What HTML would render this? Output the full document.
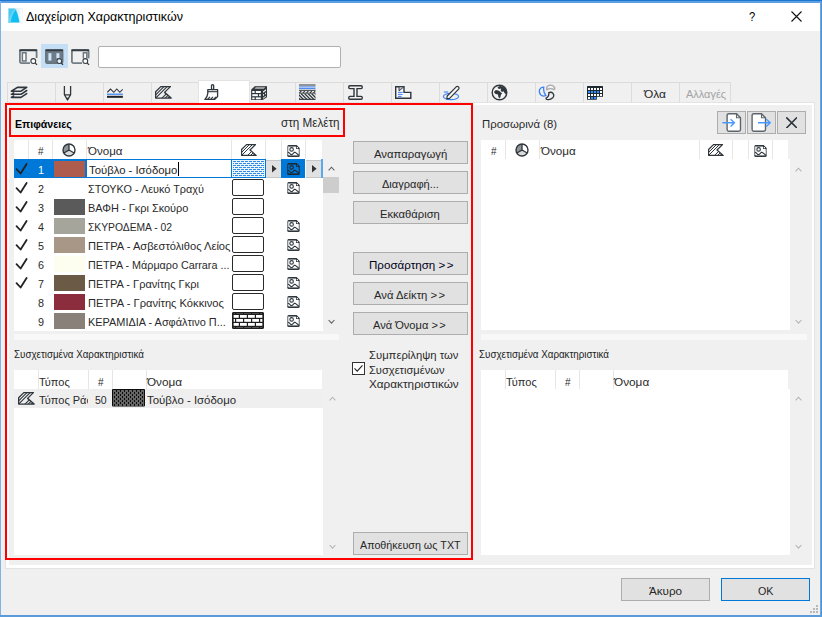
<!DOCTYPE html>
<html lang="el">
<head>
<meta charset="utf-8">
<title>Διαχείριση Χαρακτηριστικών</title>
<style>
*{box-sizing:border-box;margin:0;padding:0}
html,body{width:822px;height:617px;overflow:hidden}
body{position:relative;background:#f0f0f0;font-family:"Liberation Sans","DejaVu Sans",sans-serif;font-size:12px;color:#1a1a1a}
.a{position:absolute}
.t{position:absolute;white-space:nowrap;line-height:16px;height:16px}
.btn{position:absolute;background:#e1e1e1;border:1px solid #adadad;text-align:center;line-height:21px;height:23px;white-space:nowrap;color:#111}
.w{background:#fff}
.sw{position:absolute;left:54px;width:31px;height:16px}
.fb{position:absolute;left:232px;width:32px;height:17px;border:1.6px solid #2a2a2a;border-radius:2px;background:#fff}
.num{position:absolute;left:28px;width:24px;text-align:center;line-height:19px;height:19px}
.nm{position:absolute;left:88px;width:143px;line-height:19px;height:19px;white-space:nowrap;overflow:hidden}
.hs{position:absolute;width:1px;background:#e6e6e6}
.ts{position:absolute;top:83px;width:1px;height:20px;background:#dcdcdc}
</style>
</head>
<body>
<!-- window frame -->
<div class="a" style="left:0;top:0;width:822px;height:1px;background:#1b76d2"></div>
<div class="a" style="left:0;top:1px;width:822px;height:2px;background:#5d9fe0"></div>
<div class="a w" style="left:1px;top:3px;width:819px;height:28px"></div>
<div class="a" style="left:0;top:1px;width:1px;height:616px;background:#7fb2e6"></div>
<div class="a" style="left:820px;top:1px;width:1px;height:616px;background:#6ea6de"></div><div class="a" style="left:821px;top:1px;width:1px;height:616px;background:#4f92d4"></div>
<div class="a" style="left:0;top:615px;width:822px;height:2px;background:#5b9bdc"></div>

<!-- title -->
<svg class="a" style="left:7.600px;top:8.200px" width="15" height="15" viewBox="0 0 15 15">
<defs><linearGradient id="lg" x1="0" x2="1"><stop offset="0" stop-color="#c9e9f8"/><stop offset="1" stop-color="#ffffff"/></linearGradient></defs>
<rect x="0.300" y="0.300" width="14.400" height="14.400" fill="#fff" stroke="#e4e4e4" stroke-width="0.600"/>
<rect x="6.500" y="0.600" width="8" height="13.800" fill="url(#lg)"/>
<path d="M0.500 0.500H7C4 3.500 1.800 8 0.500 14.500Z" fill="#45cbf3"/>
<path d="M0.500 14.500C1.800 8 4 3.500 7 0.800C9 3.500 10.500 8 11.500 14.500Z" fill="#12bdf0"/>
<path d="M0.500 14.500C1.800 8 4 3.500 7 0.800L7.800 1.800C5 4.800 3.500 9 2.700 14.500Z" fill="#6ad6f6"/>
</svg>

<div class="t" style="left:25.5px;top:8.84px;font-size:12px;color:#000;transform:scaleX(1.0432);transform-origin:0 0"><span id="title">Διαχείριση Χαρακτηριστικών</span></div>
<div class="t" style="left:748.5px;top:8.50px;font-size:13px;color:#000;transform:scaleX(0.8600);transform-origin:0 0"><span id="q">?</span></div>

<svg class="a" style="left:791px;top:11px" width="11" height="11" viewBox="0 0 11 11"><path d="M0.5 0.5L10.5 10.5M10.5 0.5L0.5 10.5" stroke="#111" stroke-width="1.1" fill="none"/></svg>

<!-- toolbar -->
<div class="a" style="left:41px;top:44px;width:27px;height:24px;background:#c4def5;border-radius:1px"></div>
<svg class="a" style="left:19px;top:49px" width="19" height="17" viewBox="0 0 19 17">
<rect x="0.900" y="1.200" width="16.700" height="12.900" rx="1.500" fill="#eef0f1" stroke="#737d85" stroke-width="1.800"/>
<rect x="0.2" y="0.2" width="18.1" height="2" rx="0.8" fill="#363e44"/>
<rect x="3.400" y="3.800" width="3.600" height="8.200" fill="#fff" stroke="#6c767e" stroke-width="1.500"/>
<rect x="11" y="9" width="8" height="8" fill="#f0f0f0"/>
<circle cx="14.3" cy="12" r="2.4" fill="#fff" stroke="#333b41" stroke-width="1.050"/><path d="M16.100 13.900L18 15.900" stroke="#333b41" stroke-width="1.300"/>
</svg>
<svg class="a" style="left:45px;top:49px" width="19" height="17" viewBox="0 0 19 17">
<rect x="0.8" y="1.2" width="16.9" height="13" rx="1.5" fill="#6d7c88" stroke="#66737d" stroke-width="1.5"/>
<rect x="0.2" y="0.2" width="18.1" height="2" rx="0.8" fill="#363e44"/>
<rect x="3.4" y="4.2" width="3" height="7.4" fill="#cfe5f8"/>
<rect x="11.4" y="4.2" width="3" height="5" fill="#cfe5f8"/>
<circle cx="14.3" cy="12" r="2.9" fill="#c4def5"/>
<circle cx="14.3" cy="12" r="2.4" fill="#e8f2fb" stroke="#333b41" stroke-width="1.050"/><path d="M16.100 13.900L18 15.900" stroke="#333b41" stroke-width="1.300"/>
</svg>
<svg class="a" style="left:71px;top:49px" width="19" height="17" viewBox="0 0 19 17">
<rect x="0.900" y="1.200" width="16.700" height="12.900" rx="1.500" fill="#f0f0f0" stroke="#737d85" stroke-width="1.800"/>
<rect x="0.2" y="0.2" width="18.1" height="2" rx="0.8" fill="#363e44"/>
<rect x="12.400" y="3.800" width="3.400" height="6" fill="#fff" stroke="#6c767e" stroke-width="1.500"/>
<rect x="11" y="9.4" width="8" height="8" fill="#f0f0f0"/>
<circle cx="14.3" cy="12" r="2.4" fill="#fff" stroke="#333b41" stroke-width="1.050"/><path d="M16.100 13.900L18 15.900" stroke="#333b41" stroke-width="1.300"/>
</svg>
<div class="a w" style="left:98px;top:46px;width:243px;height:22px;border:1px solid #b0b0b0;border-radius:2px"></div>

<!-- tabs -->
<div class="a" style="left:7px;top:82px;width:724px;height:1px;background:#dcdcdc"></div>
<div class="ts" style="left:7px"></div>
<div class="ts" style="left:55px"></div>
<div class="ts" style="left:103px"></div>
<div class="ts" style="left:151px"></div>
<div class="ts" style="left:199px"></div>
<div class="ts" style="left:247px"></div>
<div class="ts" style="left:295px"></div>
<div class="ts" style="left:343px"></div>
<div class="ts" style="left:391px"></div>
<div class="ts" style="left:439px"></div>
<div class="ts" style="left:487px"></div>
<div class="ts" style="left:535px"></div>
<div class="ts" style="left:583px"></div>
<div class="ts" style="left:631px"></div>
<div class="ts" style="left:679px"></div><div class="ts" style="left:730px"></div>
<div class="a" style="left:5px;top:102px;width:810px;height:467px;border:1px solid #e3e3e3"></div>
<div class="a" style="left:6px;top:103px;width:808px;height:465px;border:2px solid #fff;border-left-width:3px;border-bottom-width:3px"></div>
<div class="a w" style="left:198px;top:80.400px;width:51.600px;height:24px;border:1px solid #e3e3e3;border-bottom:none"></div>

<svg class="a" style="left:10px;top:86px" width="18" height="13" viewBox="0 0 18 13" fill="none" stroke="#2f373d" stroke-width="1.600" stroke-linejoin="round" stroke-linecap="round">
<path d="M7.400 1.400H16.700L11 5.200H1.400Z"/><path d="M16.700 4.500L11 8.300H1.400L3.600 6.900"/><path d="M16.700 7.600L11 11.400H1.400L3.600 10"/></svg>
<svg class="a" style="left:63px;top:85px" width="9" height="16" viewBox="0 0 9 16"><path d="M1.400 0.900V9.600L4.500 15L7.600 9.600V0.900M1.400 9.800H7.600" fill="none" stroke="#2f373d" stroke-width="1.300" stroke-linejoin="round"/><path d="M3.500 13L4.500 15L5.500 13Z" fill="#2f373d" stroke="#2f373d" stroke-width="0.600"/></svg>
<svg class="a" style="left:107px;top:88px" width="17" height="11" viewBox="0 0 17 11"><path d="M0.300 4.300L3.500 1L6.800 4.300L9.800 1L12.800 4.300L15.700 1.300" fill="none" stroke="#2f373d" stroke-width="1.100"/><rect x="0" y="5.600" width="15.900" height="1.200" fill="#2f80f5"/><rect x="0" y="7.800" width="15.900" height="2" fill="#1d2429"/></svg>

<svg class="a" style="left:155px;top:86px" width="17" height="12.75" viewBox="0 0 16 12"><defs><clipPath id="fc155_86"><path d="M5.500 0.600H14.500L9 6L15.200 11.400H0.600V5.500Z"/></clipPath></defs><g clip-path="url(#fc155_86)" stroke="#2f373d" stroke-width="1.0"><path d="M-4 13L10 -1M-1 13L13 -1M5 13L19 -1M8 13L22 -1"/><path d="M11.500 11.400L13.500 9.600L15.600 11.400Z" fill="#2f373d" stroke="none"/></g><path d="M5.500 0.600H14.500L9 6L15.200 11.400H0.600V5.500Z" fill="none" stroke="#2f373d" stroke-width="1.25" stroke-linejoin="round"/></svg>
<svg class="a" style="left:204px;top:84px" width="15" height="16" viewBox="0 0 15 16" fill="none" stroke="#2f373d" stroke-width="1.300" stroke-linejoin="round">
<rect x="7.500" y="0.700" width="2.200" height="5" rx="1.100"/>
<path d="M3.800 5.600H13.600V12.500L10.800 15.400H0.900C2.600 13.800 3.600 12 3.800 9.200Z"/><path d="M3.800 7.700H13.600" stroke-width="1.100"/>
<path d="M3.800 15.200L6 12.800M6.800 15.200L9 12.800M9.800 15.200L12 12.800" stroke-width="1.200"/></svg>
<svg class="a" style="left:251px;top:85.500px" width="16.400" height="14.600" viewBox="0 0 16.400 14.600"><path d="M0.200 3.700L4 0.200H16.100V10.900L10.800 14.400H0.200Z" fill="#2f373d" stroke="#2f373d" stroke-width="0.400" stroke-linejoin="round"/><g fill="#fff"><rect x="1.300" y="5" width="2.300" height="2"/><rect x="4.800" y="5" width="5" height="2"/><rect x="1.300" y="8.200" width="5.600" height="2"/><rect x="8.100" y="8.200" width="1.700" height="2"/><rect x="1.300" y="11.400" width="2.300" height="1.900"/><rect x="4.800" y="11.400" width="5" height="1.900"/><path d="M4.800 1.400H14.200L12.800 2.500H3.600Z"/><path d="M12 5.400L15 3.300V4.700L12 6.800Z"/><path d="M12 8.600L13.100 7.800V9.300L12 10.100Z"/><path d="M14.100 7.100L15 6.500V8L14.100 8.600Z"/><path d="M12 11.800L15 9.700V10.500L12 12.700Z"/></g></svg>
<svg class="a" style="left:299px;top:84px" width="17" height="16" viewBox="0 0 17 16">
<rect x="0" y="0.5" width="16.5" height="1" fill="#2f373d"/><rect x="0" y="2.4" width="16.5" height="1" fill="#3b82f6"/><rect x="0" y="4" width="16.5" height="0.9" fill="#3b82f6"/>
<rect x="0" y="5.8" width="16.5" height="1" fill="#2f373d"/>
<defs><clipPath id="cc1"><rect x="0" y="6.8" width="16.5" height="2.2"/></clipPath><clipPath id="cc2"><rect x="0" y="9.6" width="16.5" height="6"/></clipPath></defs>
<g clip-path="url(#cc1)" stroke="#2f373d" stroke-width="1.100"><path d="M-1 11L3 6M2.5 11L6.5 6M6 11L10 6M9.5 11L13.5 6M13 11L17 6M16.5 11L20.5 6"/></g>
<rect x="0" y="8.700" width="16.5" height="0.900" fill="#2f373d"/>
<g clip-path="url(#cc2)" stroke="#2f373d" stroke-width="1.250"><path d="M-5 9.5L2 16.5M-1.5 9.5L5.5 16.5M2 9.5L9 16.5M5.5 9.5L12.500 16.5M9 9.5L16 16.5M12.5 9.5L19.5 16.5M16 9.5L23 16.5"/></g>
<rect x="0" y="14.8" width="16.5" height="1.1" fill="#2f373d"/>
</svg>
<svg class="a" style="left:348px;top:85px" width="15" height="15" viewBox="0 0 15 15"><path d="M1.8 0.8H13.2Q14.2 0.8 14.2 1.8V2.6Q14.2 3.6 13.2 3.6H9V11.4H13.2Q14.2 11.4 14.2 12.4V13.2Q14.2 14.2 13.2 14.2H1.8Q0.8 14.2 0.8 13.2V12.4Q0.8 11.4 1.8 11.4H6V3.6H1.8Q0.8 3.6 0.8 2.6V1.8Q0.8 0.8 1.8 0.8Z" fill="none" stroke="#2f373d" stroke-width="1.4"/></svg>
<svg class="a" style="left:395px;top:86px" width="17" height="13" viewBox="0 0 17 13"><path d="M0.7 0.7H9V6.4H15.8V12.3H0.7Z" fill="#f8f8f8" stroke="#2f373d" stroke-width="1.4"/><path d="M4 0.7H9L4 5Z" fill="#b9bec2" stroke="#2f373d" stroke-width="0.9"/><path d="M3 6.4H7.6M3 8.4H7.6M3 10.4H6.6" stroke="#3b82f6" stroke-width="1"/></svg>
<svg class="a" style="left:442px;top:85px" width="18" height="16" viewBox="0 0 18 16"><ellipse cx="9" cy="11.5" rx="7.6" ry="3.2" fill="none" stroke="#3b82f6" stroke-width="1.2"/><path d="M1.8 7H6.2" stroke="#3b82f6" stroke-width="1.1"/><path d="M5.200 11L14.200 1.800Q15.400 0.900 16.500 1.900Q17.500 3 16.600 4.200L7.600 13.400L4.800 13.900Z" fill="#f6f6f6" stroke="#2f373d" stroke-width="1.200" stroke-linejoin="round"/></svg>
<svg class="a" style="left:490.600px;top:84.400px" width="17" height="17" viewBox="0 0 17 17"><circle cx="8.500" cy="8.500" r="7.300" fill="#f4f4f4" stroke="#2f373d" stroke-width="1.400"/><path d="M7.400 2.700L9 1.900Q12.500 1.700 14.600 4.800Q16 7.500 15.400 10.400L13.600 9.200L12.600 7.300L11 7.900L9.600 6.500L10.200 4.500L8.200 4.900L6.400 4.100Z" fill="#2f373d"/><path d="M3.300 7.300L5 6.100L8 6.800L10 8.400L11.200 9.500L9.900 10.700L9.500 13L8.300 14.500L7.300 12.700L7 10.500L4.600 10L3.200 8.700Z" fill="#2f373d"/></svg>
<svg class="a" style="left:538px;top:84px" width="18" height="17" viewBox="0 0 18 17" fill="none" stroke-width="1.3">
<path d="M5.8 3.2Q3 2.8 1.6 5.6Q0.6 9 3.2 11.2Q5.6 12.8 7.8 11.4Q5 8 5.8 3.2Z" stroke="#3b82f6"/>
<path d="M8.6 5.6Q8.2 2 11.6 1.2Q15.2 0.8 16.8 4Q17 5.4 16 5.6Q13 3.6 8.6 5.6Z" stroke="#a9a9a9"/>
<path d="M10.8 8.6Q13.400 7.600 15 9.4Q16.6 11.8 14.8 13.800Q12 16.400 8.8 15.4Q7.600 14.800 8.200 14Q11.400 12.400 10.800 8.600Z" stroke="#2f373d"/></svg>
<svg class="a" style="left:587px;top:86px" width="16" height="14" viewBox="0 0 16 14"><path d="M0.600 0H15.400Q16 0 16 0.600V10.800H9.800V13.800H0.600Q0 13.800 0 13.200V0.600Q0 0 0.600 0Z" fill="#1f2a30"/><rect x="1" y="2" width="2" height="2" fill="#fff"/><rect x="4" y="2" width="2" height="2" fill="#fff"/><rect x="7" y="2" width="2" height="2" fill="#fff"/><rect x="10" y="2" width="2" height="2" fill="#fff"/><rect x="13" y="2" width="2" height="2" fill="#fff"/><rect x="1" y="5" width="2" height="2" fill="#2a8cff"/><rect x="4" y="5" width="2" height="2" fill="#2a8cff"/><rect x="7" y="5" width="2" height="2" fill="#2a8cff"/><rect x="10" y="5" width="2" height="2" fill="#2a8cff"/><rect x="13" y="5" width="2" height="2" fill="#fff"/><rect x="1" y="8" width="2" height="2" fill="#fff"/><rect x="4" y="8" width="2" height="2" fill="#fff"/><rect x="7" y="8" width="2" height="2" fill="#fff"/><rect x="10" y="8" width="2" height="2" fill="#fff"/><rect x="13" y="8" width="2" height="2" fill="#fff"/><rect x="1" y="11" width="2" height="2" fill="#fff"/><rect x="4" y="11" width="2" height="2" fill="#2a8cff"/><rect x="7" y="11" width="2" height="2" fill="#2a8cff"/></svg>

<div class="t" style="left:644px;top:86.38px;font-size:11.6px;color:#262626;transform:scaleX(1.0323);transform-origin:0 0"><span id="ola">Όλα</span></div>
<div class="t" style="left:685.6px;top:86.38px;font-size:11.6px;color:#a3a3a3;transform:scaleX(0.9453);transform-origin:0 0"><span id="all">Αλλαγές</span></div>


<!-- left side -->

<div class="t" style="left:15px;top:115.62px;font-size:11.5px;color:#000;transform:scaleX(0.9235);transform-origin:0 0;font-weight:bold"><span id="epi">Επιφάνειες</span></div>
<div class="t" style="left:280.7px;top:115.44px;font-size:12px;color:#2a2a2a;transform:scaleX(0.9724);transform-origin:0 0"><span id="stm">στη Μελέτη</span></div>


<div class="a w" style="left:14px;top:140px;width:307.5px;height:20px"></div><div class="a w" style="left:14px;top:159px;width:309px;height:171.500px"></div>
<div class="hs" style="left:28px;top:140px;height:19px"></div>
<div class="hs" style="left:52px;top:140px;height:19px"></div>
<div class="hs" style="left:86px;top:140px;height:19px"></div>
<div class="hs" style="left:231px;top:140px;height:19px"></div>
<div class="hs" style="left:265px;top:140px;height:19px"></div>
<div class="hs" style="left:281px;top:140px;height:19px"></div>
<div class="hs" style="left:305px;top:140px;height:19px"></div>
<div class="t" style="left:37.5px;top:143.48px;font-size:11.6px;color:#2a2a2a;transform:scaleX(0.8600);transform-origin:0 0"><span id="hh">#</span></div>
<svg class="a" style="left:62px;top:143px" width="14" height="14" viewBox="0 0 14 14"><circle cx="7" cy="7" r="6" fill="#fff"/><path d="M7 7V1A6 6 0 0 0 1.800 10Z" fill="#8d959b"/><path d="M7 7L1.800 10A6 6 0 0 0 12.200 10Z" fill="#dadada"/><circle cx="7" cy="7" r="6" fill="none" stroke="#2f373d" stroke-width="1.4"/><path d="M7 1V7L1.800 10M7 7L12.200 10" fill="none" stroke="#2f373d" stroke-width="1.3"/></svg>
<div class="t" style="left:88px;top:143.48px;font-size:11.6px;color:#2a2a2a;transform:scaleX(0.9968);transform-origin:0 0"><span id="hname">Όνομα</span></div>
<svg class="a" style="left:241px;top:144px" width="16" height="12" viewBox="0 0 16 12"><defs><clipPath id="fc241_144"><path d="M5.500 0.600H14.500L9 6L15.200 11.400H0.600V5.500Z"/></clipPath></defs><g clip-path="url(#fc241_144)" stroke="#2f373d" stroke-width="1.0"><path d="M-4 13L10 -1M-1 13L13 -1M5 13L19 -1M8 13L22 -1"/><path d="M11.500 11.400L13.500 9.600L15.600 11.400Z" fill="#2f373d" stroke="none"/></g><path d="M5.500 0.600H14.500L9 6L15.200 11.400H0.600V5.500Z" fill="none" stroke="#2f373d" stroke-width="1.25" stroke-linejoin="round"/></svg>
<svg class="a" style="left:287px;top:144.5px" width="13" height="12" viewBox="0 0 13 12"><path d="M2 0.700H9.200L12.300 3.800V10Q12.300 11.300 11 11.300H2Q0.700 11.300 0.700 10V2Q0.700 0.700 2 0.700Z" fill="#fdfdfd" stroke="#7f878d" stroke-width="1.3"/><path d="M0.900 10.300Q1 11.300 2 11.300H11Q12 11.300 12.100 10.300" fill="none" stroke="#2f373d" stroke-width="1.4"/><path d="M1.200 0.900Q1.500 0.700 2 0.700H9.200L12.300 3.800" fill="none" stroke="#2f373d" stroke-width="1.4"/><path d="M9 0.800V4H12.200Z" fill="#2f373d"/><rect x="9.700" y="2.100" width="1.300" height="1.200" fill="#fff"/><circle cx="4.600" cy="4.400" r="1.750" fill="#fff" stroke="#2f373d" stroke-width="1.1"/><path d="M0.900 7.300L2.200 7.800L4.200 9.800L5.400 9.300L7.500 7.200L8.600 7.600L11.900 10.300" fill="none" stroke="#2f373d" stroke-width="1.1" stroke-linejoin="round"/></svg>
<div class="a" style="left:14px;top:159.400px;width:72px;height:19px;background:#0078d7"></div>
<svg class="a" style="left:15px;top:162px" width="13" height="13" viewBox="0 0 13 13"><path d="M1.5 7.2L5.6 11.5L11.6 2" fill="none" stroke="#222" stroke-width="1.8" stroke-linecap="round" stroke-linejoin="round"/></svg>
<div class="t" style="left:37.5px;top:162.38px;font-size:11.6px;color:#fff;transform:scaleX(0.9298);transform-origin:0 0"><span id="n1">1</span></div>
<div class="sw" style="top:160.5px;background:#ad5c4e"></div>
<div class="a w" style="left:85.500px;top:159.4px;width:146px;height:18.600px;border:1px solid #0078d7;border-left-width:1.500px;border-top-width:1.500px"></div>
<div class="t" style="left:89.1px;top:162.48px;font-size:11.6px;color:#262626;transform:scaleX(0.9757);transform-origin:0 0"><span id="r1">Τούβλο - Ισόδομο</span></div>
<div class="a" style="left:177.700px;top:162px;width:1px;height:14px;background:#000"></div>
<svg class="a" style="left:231px;top:159px" width="35" height="19" viewBox="0 0 35 19" shape-rendering="crispEdges"><rect x="0.5" y="0.5" width="34" height="18" fill="#eaf4fd" stroke="#0078d7" stroke-width="1"/><g fill="#2f8ae6"><rect x="2" y="2" width="3" height="1"/><rect x="6" y="2" width="3" height="1"/><rect x="10" y="2" width="3" height="1"/><rect x="14" y="2" width="3" height="1"/><rect x="18" y="2" width="3" height="1"/><rect x="22" y="2" width="3" height="1"/><rect x="26" y="2" width="3" height="1"/><rect x="30" y="2" width="3" height="1"/><rect x="2" y="4" width="1" height="1"/><rect x="4" y="4" width="3" height="1"/><rect x="8" y="4" width="3" height="1"/><rect x="12" y="4" width="3" height="1"/><rect x="16" y="4" width="3" height="1"/><rect x="20" y="4" width="3" height="1"/><rect x="24" y="4" width="3" height="1"/><rect x="28" y="4" width="3" height="1"/><rect x="32" y="4" width="1" height="1"/><rect x="2" y="6" width="3" height="1"/><rect x="6" y="6" width="3" height="1"/><rect x="10" y="6" width="3" height="1"/><rect x="14" y="6" width="3" height="1"/><rect x="18" y="6" width="3" height="1"/><rect x="22" y="6" width="3" height="1"/><rect x="26" y="6" width="3" height="1"/><rect x="30" y="6" width="3" height="1"/><rect x="2" y="8" width="1" height="1"/><rect x="4" y="8" width="3" height="1"/><rect x="8" y="8" width="3" height="1"/><rect x="12" y="8" width="3" height="1"/><rect x="16" y="8" width="3" height="1"/><rect x="20" y="8" width="3" height="1"/><rect x="24" y="8" width="3" height="1"/><rect x="28" y="8" width="3" height="1"/><rect x="32" y="8" width="1" height="1"/><rect x="2" y="10" width="3" height="1"/><rect x="6" y="10" width="3" height="1"/><rect x="10" y="10" width="3" height="1"/><rect x="14" y="10" width="3" height="1"/><rect x="18" y="10" width="3" height="1"/><rect x="22" y="10" width="3" height="1"/><rect x="26" y="10" width="3" height="1"/><rect x="30" y="10" width="3" height="1"/><rect x="2" y="12" width="1" height="1"/><rect x="4" y="12" width="3" height="1"/><rect x="8" y="12" width="3" height="1"/><rect x="12" y="12" width="3" height="1"/><rect x="16" y="12" width="3" height="1"/><rect x="20" y="12" width="3" height="1"/><rect x="24" y="12" width="3" height="1"/><rect x="28" y="12" width="3" height="1"/><rect x="32" y="12" width="1" height="1"/><rect x="2" y="14" width="3" height="1"/><rect x="6" y="14" width="3" height="1"/><rect x="10" y="14" width="3" height="1"/><rect x="14" y="14" width="3" height="1"/><rect x="18" y="14" width="3" height="1"/><rect x="22" y="14" width="3" height="1"/><rect x="26" y="14" width="3" height="1"/><rect x="30" y="14" width="3" height="1"/><rect x="2" y="16" width="1" height="1"/><rect x="4" y="16" width="3" height="1"/><rect x="8" y="16" width="3" height="1"/><rect x="12" y="16" width="3" height="1"/><rect x="16" y="16" width="3" height="1"/><rect x="20" y="16" width="3" height="1"/><rect x="24" y="16" width="3" height="1"/><rect x="28" y="16" width="3" height="1"/><rect x="32" y="16" width="1" height="1"/></g></svg>
<div class="a" style="left:266px;top:160px;width:15.500px;height:17.500px;background:#e1e1e1;border:1px solid #c6c6c6;border-left:none;border-right:none"></div>
<div class="a" style="left:281.400px;top:159.4px;width:24px;height:19px;background:#0078d7"></div>
<div class="a" style="left:305.500px;top:160px;width:16px;height:17.500px;background:#e1e1e1;border:1px solid #c6c6c6;border-left:none;border-right:none"></div>
<div class="a" style="left:321.200px;top:159.4px;width:1.500px;height:19px;background:#5aa9ee"></div>
<svg class="a" style="left:272.3px;top:165.4px" width="4.600" height="7.400" viewBox="0 0 4.600 7.400"><path d="M0 0L4.600 3.700L0 7.400Z" fill="#333"/></svg>
<svg class="a" style="left:312.2px;top:165.4px" width="4.600" height="7.400" viewBox="0 0 4.600 7.400"><path d="M0 0L4.600 3.700L0 7.400Z" fill="#333"/></svg>
<svg class="a" style="left:287px;top:162.5px" width="13" height="12" viewBox="0 0 13 12"><path d="M2 0.700H9.200L12.300 3.800V10Q12.300 11.300 11 11.300H2Q0.700 11.300 0.700 10V2Q0.700 0.700 2 0.700Z" fill="#0078d7" stroke="#1f3b55" stroke-width="1.3"/><path d="M0.900 10.300Q1 11.300 2 11.300H11Q12 11.300 12.100 10.300" fill="none" stroke="#1b2833" stroke-width="1.4"/><path d="M1.200 0.900Q1.500 0.700 2 0.700H9.200L12.300 3.800" fill="none" stroke="#1b2833" stroke-width="1.4"/><path d="M9 0.800V4H12.200Z" fill="#1b2833"/><rect x="9.700" y="2.100" width="1.300" height="1.200" fill="#0078d7"/><circle cx="4.600" cy="4.400" r="1.750" fill="#0078d7" stroke="#1b2833" stroke-width="1.1"/><path d="M0.900 7.300L2.200 7.800L4.200 9.800L5.400 9.300L7.500 7.200L8.600 7.600L11.900 10.300" fill="none" stroke="#1b2833" stroke-width="1.1" stroke-linejoin="round"/></svg>
<svg class="a" style="left:15px;top:181px" width="13" height="13" viewBox="0 0 13 13"><path d="M1.5 7.2L5.6 11.5L11.6 2" fill="none" stroke="#222" stroke-width="1.8" stroke-linecap="round" stroke-linejoin="round"/></svg>
<div class="t" style="left:37.5px;top:181.38px;font-size:11.6px;color:#2a2a2a;transform:scaleX(0.9298);transform-origin:0 0"><span id="n2">2</span></div>
<div class="t" style="left:87.6px;top:181.38px;font-size:11.6px;color:#2a2a2a;transform:scaleX(0.9373);transform-origin:0 0"><span id="r2">ΣΤΟΥΚΟ - Λευκό Τραχύ</span></div>
<div class="fb" style="top:179px"></div>
<svg class="a" style="left:287px;top:181.5px" width="13" height="12" viewBox="0 0 13 12"><path d="M2 0.700H9.200L12.300 3.800V10Q12.300 11.300 11 11.300H2Q0.700 11.300 0.700 10V2Q0.700 0.700 2 0.700Z" fill="#fdfdfd" stroke="#7f878d" stroke-width="1.3"/><path d="M0.900 10.300Q1 11.300 2 11.300H11Q12 11.300 12.100 10.300" fill="none" stroke="#2f373d" stroke-width="1.4"/><path d="M1.200 0.900Q1.500 0.700 2 0.700H9.200L12.300 3.800" fill="none" stroke="#2f373d" stroke-width="1.4"/><path d="M9 0.800V4H12.200Z" fill="#2f373d"/><rect x="9.700" y="2.100" width="1.300" height="1.200" fill="#fff"/><circle cx="4.600" cy="4.400" r="1.750" fill="#fff" stroke="#2f373d" stroke-width="1.1"/><path d="M0.900 7.300L2.200 7.800L4.200 9.800L5.400 9.300L7.500 7.200L8.600 7.600L11.900 10.300" fill="none" stroke="#2f373d" stroke-width="1.1" stroke-linejoin="round"/></svg>
<svg class="a" style="left:15px;top:200px" width="13" height="13" viewBox="0 0 13 13"><path d="M1.5 7.2L5.6 11.5L11.6 2" fill="none" stroke="#222" stroke-width="1.8" stroke-linecap="round" stroke-linejoin="round"/></svg>
<div class="t" style="left:37.5px;top:200.38px;font-size:11.6px;color:#2a2a2a;transform:scaleX(0.9298);transform-origin:0 0"><span id="n3">3</span></div>
<div class="sw" style="top:198.5px;background:#5a5a5a"></div>
<div class="t" style="left:87.6px;top:200.38px;font-size:11.6px;color:#2a2a2a;transform:scaleX(0.9445);transform-origin:0 0"><span id="r3">ΒΑΦΗ - Γκρι Σκούρο</span></div>
<div class="fb" style="top:198px"></div>
<svg class="a" style="left:15px;top:219px" width="13" height="13" viewBox="0 0 13 13"><path d="M1.5 7.2L5.6 11.5L11.6 2" fill="none" stroke="#222" stroke-width="1.8" stroke-linecap="round" stroke-linejoin="round"/></svg>
<div class="t" style="left:37.5px;top:219.38px;font-size:11.6px;color:#2a2a2a;transform:scaleX(0.9298);transform-origin:0 0"><span id="n4">4</span></div>
<div class="sw" style="top:217.5px;background:#a5a59b"></div>
<div class="t" style="left:87.6px;top:219.38px;font-size:11.6px;color:#2a2a2a;transform:scaleX(0.8882);transform-origin:0 0"><span id="r4">ΣΚΥΡΟΔΕΜΑ - 02</span></div>
<div class="fb" style="top:217px"></div>
<svg class="a" style="left:287px;top:219.5px" width="13" height="12" viewBox="0 0 13 12"><path d="M2 0.700H9.200L12.300 3.800V10Q12.300 11.300 11 11.300H2Q0.700 11.300 0.700 10V2Q0.700 0.700 2 0.700Z" fill="#fdfdfd" stroke="#7f878d" stroke-width="1.3"/><path d="M0.900 10.300Q1 11.300 2 11.300H11Q12 11.300 12.100 10.300" fill="none" stroke="#2f373d" stroke-width="1.4"/><path d="M1.200 0.900Q1.500 0.700 2 0.700H9.200L12.300 3.800" fill="none" stroke="#2f373d" stroke-width="1.4"/><path d="M9 0.800V4H12.200Z" fill="#2f373d"/><rect x="9.700" y="2.100" width="1.300" height="1.200" fill="#fff"/><circle cx="4.600" cy="4.400" r="1.750" fill="#fff" stroke="#2f373d" stroke-width="1.1"/><path d="M0.900 7.300L2.200 7.800L4.200 9.800L5.400 9.300L7.500 7.200L8.600 7.600L11.900 10.300" fill="none" stroke="#2f373d" stroke-width="1.1" stroke-linejoin="round"/></svg>
<svg class="a" style="left:15px;top:238px" width="13" height="13" viewBox="0 0 13 13"><path d="M1.5 7.2L5.6 11.5L11.6 2" fill="none" stroke="#222" stroke-width="1.8" stroke-linecap="round" stroke-linejoin="round"/></svg>
<div class="t" style="left:37.5px;top:238.38px;font-size:11.6px;color:#2a2a2a;transform:scaleX(0.9298);transform-origin:0 0"><span id="n5">5</span></div>
<div class="sw" style="top:236.5px;background:#a89786"></div>
<div class="t" style="left:87.6px;top:238.38px;font-size:11.6px;color:#2a2a2a;transform:scaleX(0.9591);transform-origin:0 0"><span id="r5">ΠΕΤΡΑ - Ασβεστόλιθος Λείος</span></div>
<div class="fb" style="top:236px"></div>
<svg class="a" style="left:287px;top:238.5px" width="13" height="12" viewBox="0 0 13 12"><path d="M2 0.700H9.200L12.300 3.800V10Q12.300 11.300 11 11.300H2Q0.700 11.300 0.700 10V2Q0.700 0.700 2 0.700Z" fill="#fdfdfd" stroke="#7f878d" stroke-width="1.3"/><path d="M0.900 10.300Q1 11.300 2 11.300H11Q12 11.300 12.100 10.300" fill="none" stroke="#2f373d" stroke-width="1.4"/><path d="M1.200 0.900Q1.500 0.700 2 0.700H9.200L12.300 3.800" fill="none" stroke="#2f373d" stroke-width="1.4"/><path d="M9 0.800V4H12.200Z" fill="#2f373d"/><rect x="9.700" y="2.100" width="1.300" height="1.200" fill="#fff"/><circle cx="4.600" cy="4.400" r="1.750" fill="#fff" stroke="#2f373d" stroke-width="1.1"/><path d="M0.900 7.300L2.200 7.800L4.200 9.800L5.400 9.300L7.500 7.200L8.600 7.600L11.900 10.300" fill="none" stroke="#2f373d" stroke-width="1.1" stroke-linejoin="round"/></svg>
<svg class="a" style="left:15px;top:257px" width="13" height="13" viewBox="0 0 13 13"><path d="M1.5 7.2L5.6 11.5L11.6 2" fill="none" stroke="#222" stroke-width="1.8" stroke-linecap="round" stroke-linejoin="round"/></svg>
<div class="t" style="left:37.5px;top:257.38px;font-size:11.6px;color:#2a2a2a;transform:scaleX(0.9298);transform-origin:0 0"><span id="n6">6</span></div>
<div class="sw" style="top:255.5px;background:#fdfdf0"></div>
<div class="t" style="left:87.6px;top:257.38px;font-size:11.6px;color:#2a2a2a;transform:scaleX(0.9287);transform-origin:0 0"><span id="r6">ΠΕΤΡΑ - Μάρμαρο Carrara ...</span></div>
<div class="fb" style="top:255px"></div>
<svg class="a" style="left:287px;top:257.5px" width="13" height="12" viewBox="0 0 13 12"><path d="M2 0.700H9.200L12.300 3.800V10Q12.300 11.300 11 11.300H2Q0.700 11.300 0.700 10V2Q0.700 0.700 2 0.700Z" fill="#fdfdfd" stroke="#7f878d" stroke-width="1.3"/><path d="M0.900 10.300Q1 11.300 2 11.300H11Q12 11.300 12.100 10.300" fill="none" stroke="#2f373d" stroke-width="1.4"/><path d="M1.200 0.900Q1.500 0.700 2 0.700H9.200L12.300 3.800" fill="none" stroke="#2f373d" stroke-width="1.4"/><path d="M9 0.800V4H12.200Z" fill="#2f373d"/><rect x="9.700" y="2.100" width="1.300" height="1.200" fill="#fff"/><circle cx="4.600" cy="4.400" r="1.750" fill="#fff" stroke="#2f373d" stroke-width="1.1"/><path d="M0.900 7.300L2.200 7.800L4.200 9.800L5.400 9.300L7.500 7.200L8.600 7.600L11.900 10.300" fill="none" stroke="#2f373d" stroke-width="1.1" stroke-linejoin="round"/></svg>
<svg class="a" style="left:15px;top:276px" width="13" height="13" viewBox="0 0 13 13"><path d="M1.5 7.2L5.6 11.5L11.6 2" fill="none" stroke="#222" stroke-width="1.8" stroke-linecap="round" stroke-linejoin="round"/></svg>
<div class="t" style="left:37.5px;top:276.38px;font-size:11.6px;color:#2a2a2a;transform:scaleX(0.9298);transform-origin:0 0"><span id="n7">7</span></div>
<div class="sw" style="top:274.5px;background:#6b5a45"></div>
<div class="t" style="left:87.6px;top:276.38px;font-size:11.6px;color:#2a2a2a;transform:scaleX(0.9503);transform-origin:0 0"><span id="r7">ΠΕΤΡΑ - Γρανίτης Γκρι</span></div>
<div class="fb" style="top:274px"></div>
<svg class="a" style="left:287px;top:276.5px" width="13" height="12" viewBox="0 0 13 12"><path d="M2 0.700H9.200L12.300 3.800V10Q12.300 11.300 11 11.300H2Q0.700 11.300 0.700 10V2Q0.700 0.700 2 0.700Z" fill="#fdfdfd" stroke="#7f878d" stroke-width="1.3"/><path d="M0.900 10.300Q1 11.300 2 11.300H11Q12 11.300 12.100 10.300" fill="none" stroke="#2f373d" stroke-width="1.4"/><path d="M1.200 0.900Q1.500 0.700 2 0.700H9.200L12.300 3.800" fill="none" stroke="#2f373d" stroke-width="1.4"/><path d="M9 0.800V4H12.200Z" fill="#2f373d"/><rect x="9.700" y="2.100" width="1.300" height="1.200" fill="#fff"/><circle cx="4.600" cy="4.400" r="1.750" fill="#fff" stroke="#2f373d" stroke-width="1.1"/><path d="M0.900 7.300L2.200 7.800L4.200 9.800L5.400 9.300L7.500 7.200L8.600 7.600L11.900 10.300" fill="none" stroke="#2f373d" stroke-width="1.1" stroke-linejoin="round"/></svg>
<div class="t" style="left:37.5px;top:295.38px;font-size:11.6px;color:#2a2a2a;transform:scaleX(0.9298);transform-origin:0 0"><span id="n8">8</span></div>
<div class="sw" style="top:293.5px;background:#8b2d3d"></div>
<div class="t" style="left:87.6px;top:295.38px;font-size:11.6px;color:#2a2a2a;transform:scaleX(0.9605);transform-origin:0 0"><span id="r8">ΠΕΤΡΑ - Γρανίτης Κόκκινος</span></div>
<div class="fb" style="top:293px"></div>
<svg class="a" style="left:287px;top:295.5px" width="13" height="12" viewBox="0 0 13 12"><path d="M2 0.700H9.200L12.300 3.800V10Q12.300 11.300 11 11.300H2Q0.700 11.300 0.700 10V2Q0.700 0.700 2 0.700Z" fill="#fdfdfd" stroke="#7f878d" stroke-width="1.3"/><path d="M0.900 10.300Q1 11.300 2 11.300H11Q12 11.300 12.100 10.300" fill="none" stroke="#2f373d" stroke-width="1.4"/><path d="M1.200 0.900Q1.500 0.700 2 0.700H9.200L12.300 3.800" fill="none" stroke="#2f373d" stroke-width="1.4"/><path d="M9 0.800V4H12.200Z" fill="#2f373d"/><rect x="9.700" y="2.100" width="1.300" height="1.200" fill="#fff"/><circle cx="4.600" cy="4.400" r="1.750" fill="#fff" stroke="#2f373d" stroke-width="1.1"/><path d="M0.900 7.300L2.200 7.800L4.200 9.800L5.400 9.300L7.500 7.200L8.600 7.600L11.900 10.300" fill="none" stroke="#2f373d" stroke-width="1.1" stroke-linejoin="round"/></svg>
<div class="t" style="left:37.5px;top:314.38px;font-size:11.6px;color:#2a2a2a;transform:scaleX(0.9298);transform-origin:0 0"><span id="n9">9</span></div>
<div class="sw" style="top:312.5px;background:#8a807a"></div>
<div class="t" style="left:87.6px;top:314.38px;font-size:11.6px;color:#2a2a2a;transform:scaleX(0.9423);transform-origin:0 0"><span id="r9">ΚΕΡΑΜΙΔΙΑ - Ασφάλτινο Π...</span></div>
<svg class="a" style="left:232px;top:312px" width="32" height="17" viewBox="0 0 32 17"><rect x="0.700" y="0.700" width="30.600" height="15.600" rx="1.2" fill="#fff" stroke="#1e1e1e" stroke-width="1.4"/><g fill="#1e1e1e"><rect x="0" y="1.8" width="32" height="1.2"/><rect x="0" y="5.8" width="32" height="1.2"/><rect x="0" y="9.8" width="32" height="1.2"/><rect x="0" y="13.8" width="32" height="1.2"/><rect x="3.0" y="0" width="1.2" height="2.4"/><rect x="11.0" y="0" width="1.2" height="2.4"/><rect x="19.0" y="0" width="1.2" height="2.4"/><rect x="27.0" y="0" width="1.2" height="2.4"/><rect x="6.8" y="2.4" width="1.2" height="4.0"/><rect x="14.8" y="2.4" width="1.2" height="4.0"/><rect x="22.8" y="2.4" width="1.2" height="4.0"/><rect x="3.0" y="6.4" width="1.2" height="4.0"/><rect x="11.0" y="6.4" width="1.2" height="4.0"/><rect x="19.0" y="6.4" width="1.2" height="4.0"/><rect x="27.0" y="6.4" width="1.2" height="4.0"/><rect x="6.8" y="10.4" width="1.2" height="4.0"/><rect x="14.8" y="10.4" width="1.2" height="4.0"/><rect x="22.8" y="10.4" width="1.2" height="4.0"/><rect x="3.0" y="14.4" width="1.2" height="2.6"/><rect x="11.0" y="14.4" width="1.2" height="2.6"/><rect x="19.0" y="14.4" width="1.2" height="2.6"/><rect x="27.0" y="14.4" width="1.2" height="2.6"/></g><rect x="0.700" y="0.700" width="30.600" height="15.600" rx="1.2" fill="none" stroke="#1e1e1e" stroke-width="1.4"/></svg>
<svg class="a" style="left:287px;top:314.5px" width="13" height="12" viewBox="0 0 13 12"><path d="M2 0.700H9.200L12.300 3.800V10Q12.300 11.300 11 11.300H2Q0.700 11.300 0.700 10V2Q0.700 0.700 2 0.700Z" fill="#fdfdfd" stroke="#7f878d" stroke-width="1.3"/><path d="M0.900 10.300Q1 11.300 2 11.300H11Q12 11.300 12.100 10.300" fill="none" stroke="#2f373d" stroke-width="1.4"/><path d="M1.200 0.900Q1.500 0.700 2 0.700H9.200L12.300 3.800" fill="none" stroke="#2f373d" stroke-width="1.4"/><path d="M9 0.800V4H12.200Z" fill="#2f373d"/><rect x="9.700" y="2.100" width="1.300" height="1.200" fill="#fff"/><circle cx="4.600" cy="4.400" r="1.750" fill="#fff" stroke="#2f373d" stroke-width="1.1"/><path d="M0.900 7.300L2.200 7.800L4.200 9.800L5.400 9.300L7.500 7.200L8.600 7.600L11.900 10.300" fill="none" stroke="#2f373d" stroke-width="1.1" stroke-linejoin="round"/></svg>
<div class="a" style="left:323px;top:177px;width:16px;height:16px;background:#cdcdcd"></div>
<svg class="a" style="left:327.6px;top:166.2px" width="7" height="5.4" viewBox="0 0 7 5.4"><path d="M0.6 4.4L3.5 1.2L6.4 4.4" fill="none" stroke="#606060" stroke-width="1.1"/></svg>
<svg class="a" style="left:327.6px;top:319px" width="7" height="5.4" viewBox="0 0 7 5.4"><path d="M0.6 1L3.5 4.2L6.4 1" fill="none" stroke="#606060" stroke-width="1.1"/></svg>
<div class="a" style="left:14px;top:334px;width:325px;height:6px;background:#f8f8f8"></div>
<div class="btn" style="left:353px;top:141px;width:115px"></div>
<div class="t" style="left:373.8px;top:145.88px;font-size:11.6px;color:#262626;transform:scaleX(0.9779);transform-origin:0 0"><span id="b1">Αναπαραγωγή</span></div>
<div class="btn" style="left:353px;top:171px;width:115px"></div>
<div class="t" style="left:381.7px;top:175.88px;font-size:11.6px;color:#262626;transform:scaleX(0.9523);transform-origin:0 0"><span id="b2">Διαγραφή...</span></div>
<div class="btn" style="left:353px;top:201px;width:115px"></div>
<div class="t" style="left:380.4px;top:205.88px;font-size:11.6px;color:#262626;transform:scaleX(0.9674);transform-origin:0 0"><span id="b3">Εκκαθάριση</span></div>
<div class="btn" style="left:353px;top:252px;width:115px"></div>
<div class="t" style="left:369.4px;top:256.88px;font-size:11.6px;color:#000018;transform:scaleX(0.9987);transform-origin:0 0"><span id="b4">Προσάρτηση <span style="letter-spacing:1.5px">&gt;&gt;</span></span></div>
<div class="btn" style="left:353px;top:282px;width:115px"></div>
<div class="t" style="left:373.8px;top:286.88px;font-size:11.6px;color:#262626;transform:scaleX(0.9721);transform-origin:0 0"><span id="b5">Ανά Δείκτη <span style="letter-spacing:1.5px">&gt;&gt;</span></span></div>
<div class="btn" style="left:353px;top:312px;width:115px"></div>
<div class="t" style="left:372.9px;top:316.88px;font-size:11.6px;color:#262626;transform:scaleX(0.9559);transform-origin:0 0"><span id="b6">Ανά Όνομα <span style="letter-spacing:1.5px">&gt;&gt;</span></span></div>
<div class="btn" style="left:353px;top:532px;width:115px"></div>
<div class="t" style="left:359.9px;top:536.98px;font-size:11.6px;color:#262626;transform:scaleX(0.9245);transform-origin:0 0"><span id="b7">Αποθήκευση ως TXT</span></div>
<div class="a w" style="left:352px;top:362px;width:13px;height:13px;border:1px solid #333"></div>
<svg class="a" style="left:353px;top:363px" width="11" height="11" viewBox="0 0 11 11"><path d="M1.500 5.400L4.200 8.200L9.500 2.400" fill="none" stroke="#222" stroke-width="1.100"/></svg>

<div class="t" style="left:368.9px;top:346.68px;font-size:11.6px;color:#2a2a2a;transform:scaleX(0.9721);transform-origin:0 0"><span id="c1">Συμπερίληψη των</span></div>
<div class="t" style="left:368.9px;top:361.68px;font-size:11.6px;color:#2a2a2a;transform:scaleX(0.9589);transform-origin:0 0"><span id="c2">Συσχετισμένων</span></div>
<div class="t" style="left:368.9px;top:376.48px;font-size:11.6px;color:#2a2a2a;transform:scaleX(1.0130);transform-origin:0 0"><span id="c3">Χαρακτηριστικών</span></div>
<div class="t" style="left:14.4px;top:347.04px;font-size:10px;color:#222;transform:scaleX(0.9767);transform-origin:0 0"><span id="sx1">Συσχετισμένα Χαρακτηριστικά</span></div>
<div class="a w" style="left:14px;top:370px;width:307.500px;height:20px"></div><div class="a w" style="left:14px;top:389px;width:309px;height:166px"></div>
<div class="a" style="left:14px;top:389.400px;width:309px;height:19px;background:#efefef"></div>

<div class="hs" style="left:38px;top:370px;height:19px"></div>
<div class="hs" style="left:88px;top:370px;height:19px"></div>
<div class="hs" style="left:112px;top:370px;height:19px"></div>
<div class="hs" style="left:146px;top:370px;height:19px"></div>
<div class="t" style="left:39.2px;top:373.58px;font-size:11.6px;color:#2a2a2a;transform:scaleX(0.9506);transform-origin:0 0"><span id="lt">Τύπος</span></div>
<div class="t" style="left:97.6px;top:373.58px;font-size:11.6px;color:#2a2a2a;transform:scaleX(0.8678);transform-origin:0 0"><span id="lh">#</span></div>
<div class="t" style="left:147.2px;top:373.58px;font-size:11.6px;color:#2a2a2a;transform:scaleX(1.0142);transform-origin:0 0"><span id="ln">Όνομα</span></div>
<div class="a" style="left:39.2px;top:392.38px;width:48.6px;height:16px;overflow:hidden"><div class="t" style="left:0;top:0;font-size:11.6px;color:#2a2a2a;transform:scaleX(0.9506);transform-origin:0 0" ><span id="lt1">Τύπος Ράστερ</span></div></div>
<div class="t" style="left:94.7px;top:392.38px;font-size:11.6px;color:#2a2a2a;transform:scaleX(0.9065);transform-origin:0 0"><span id="l50">50</span></div>
<div class="t" style="left:147.2px;top:392.38px;font-size:11.6px;color:#2a2a2a;transform:scaleX(0.9845);transform-origin:0 0"><span id="ln1">Τούβλο - Ισόδομο</span></div>
<svg class="a" style="left:18px;top:392px" width="17" height="12.75" viewBox="0 0 16 12"><defs><clipPath id="fc18_392"><path d="M5.500 0.600H14.500L9 6L15.200 11.400H0.600V5.500Z"/></clipPath></defs><g clip-path="url(#fc18_392)" stroke="#2f373d" stroke-width="1.0"><path d="M-4 13L10 -1M-1 13L13 -1M5 13L19 -1M8 13L22 -1"/><path d="M11.500 11.400L13.500 9.600L15.600 11.400Z" fill="#2f373d" stroke="none"/></g><path d="M5.500 0.600H14.500L9 6L15.200 11.400H0.600V5.500Z" fill="none" stroke="#2f373d" stroke-width="1.25" stroke-linejoin="round"/></svg>
<svg class="a" style="left:112.300px;top:389.300px" width="33" height="17.600" viewBox="0 0 33 17.600"><rect width="33" height="17.600" rx="1" fill="#0c0c0c"/><g fill="#bdbdbd"><rect x="1" y="1.5" width="3" height="1"/><rect x="5" y="1.5" width="3" height="1"/><rect x="9" y="1.5" width="3" height="1"/><rect x="13" y="1.5" width="3" height="1"/><rect x="17" y="1.5" width="3" height="1"/><rect x="21" y="1.5" width="3" height="1"/><rect x="25" y="1.5" width="3" height="1"/><rect x="29" y="1.5" width="3" height="1"/><rect x="1" y="3.5" width="1" height="1"/><rect x="3" y="3.5" width="3" height="1"/><rect x="7" y="3.5" width="3" height="1"/><rect x="11" y="3.5" width="3" height="1"/><rect x="15" y="3.5" width="3" height="1"/><rect x="19" y="3.5" width="3" height="1"/><rect x="23" y="3.5" width="3" height="1"/><rect x="27" y="3.5" width="3" height="1"/><rect x="31" y="3.5" width="1" height="1"/><rect x="1" y="5.5" width="3" height="1"/><rect x="5" y="5.5" width="3" height="1"/><rect x="9" y="5.5" width="3" height="1"/><rect x="13" y="5.5" width="3" height="1"/><rect x="17" y="5.5" width="3" height="1"/><rect x="21" y="5.5" width="3" height="1"/><rect x="25" y="5.5" width="3" height="1"/><rect x="29" y="5.5" width="3" height="1"/><rect x="1" y="7.5" width="1" height="1"/><rect x="3" y="7.5" width="3" height="1"/><rect x="7" y="7.5" width="3" height="1"/><rect x="11" y="7.5" width="3" height="1"/><rect x="15" y="7.5" width="3" height="1"/><rect x="19" y="7.5" width="3" height="1"/><rect x="23" y="7.5" width="3" height="1"/><rect x="27" y="7.5" width="3" height="1"/><rect x="31" y="7.5" width="1" height="1"/><rect x="1" y="9.5" width="3" height="1"/><rect x="5" y="9.5" width="3" height="1"/><rect x="9" y="9.5" width="3" height="1"/><rect x="13" y="9.5" width="3" height="1"/><rect x="17" y="9.5" width="3" height="1"/><rect x="21" y="9.5" width="3" height="1"/><rect x="25" y="9.5" width="3" height="1"/><rect x="29" y="9.5" width="3" height="1"/><rect x="1" y="11.5" width="1" height="1"/><rect x="3" y="11.5" width="3" height="1"/><rect x="7" y="11.5" width="3" height="1"/><rect x="11" y="11.5" width="3" height="1"/><rect x="15" y="11.5" width="3" height="1"/><rect x="19" y="11.5" width="3" height="1"/><rect x="23" y="11.5" width="3" height="1"/><rect x="27" y="11.5" width="3" height="1"/><rect x="31" y="11.5" width="1" height="1"/><rect x="1" y="13.5" width="3" height="1"/><rect x="5" y="13.5" width="3" height="1"/><rect x="9" y="13.5" width="3" height="1"/><rect x="13" y="13.5" width="3" height="1"/><rect x="17" y="13.5" width="3" height="1"/><rect x="21" y="13.5" width="3" height="1"/><rect x="25" y="13.5" width="3" height="1"/><rect x="29" y="13.5" width="3" height="1"/><rect x="1" y="15.5" width="1" height="1"/><rect x="3" y="15.5" width="3" height="1"/><rect x="7" y="15.5" width="3" height="1"/><rect x="11" y="15.5" width="3" height="1"/><rect x="15" y="15.5" width="3" height="1"/><rect x="19" y="15.5" width="3" height="1"/><rect x="23" y="15.5" width="3" height="1"/><rect x="27" y="15.5" width="3" height="1"/><rect x="31" y="15.5" width="1" height="1"/></g></svg>
<svg class="a" style="left:328.5px;top:396px" width="7" height="5.4" viewBox="0 0 7 5.4"><path d="M0.6 4.4L3.5 1.2L6.4 4.4" fill="none" stroke="#b4b4b4" stroke-width="1.1"/></svg>
<svg class="a" style="left:328.5px;top:543.5px" width="7" height="5.4" viewBox="0 0 7 5.4"><path d="M0.6 1L3.5 4.2L6.4 1" fill="none" stroke="#b4b4b4" stroke-width="1.1"/></svg>
<!-- right side -->

<div class="t" style="left:481.7px;top:115.98px;font-size:11.6px;color:#2a2a2a;transform:scaleX(0.9780);transform-origin:0 0"><span id="pros">Προσωρινά (8)</span></div>

<div class="btn" style="left:717px;top:111px;width:29px"></div>
<div class="btn" style="left:747px;top:111px;width:29px"></div>
<div class="btn" style="left:777px;top:111px;width:29px"></div>
<svg class="a" style="left:722px;top:113px" width="20" height="19" viewBox="0 0 20 19"><path d="M6.800 0.800H14.500L18.500 4.800V16.500Q18.500 18.200 16.800 18.200H6.800Q5.100 18.200 5.100 16.500V2.500Q5.100 0.800 6.800 0.800Z" fill="#fff" stroke="#5c656b" stroke-width="1.400"/><path d="M14.500 0.800V4.800H18.500" fill="none" stroke="#5c656b" stroke-width="1.100"/><path d="M0.500 9.800H12M8.600 6.200L12.400 9.800L8.600 13.400" fill="none" stroke="#4a98ff" stroke-width="1.400"/></svg>
<svg class="a" style="left:751px;top:113px" width="21" height="19" viewBox="0 0 21 19"><path d="M2.800 0.800H10.500L14.500 4.800V16.500Q14.500 18.200 12.800 18.200H2.800Q1.100 18.200 1.100 16.500V2.500Q1.100 0.800 2.800 0.800Z" fill="#fff" stroke="#5c656b" stroke-width="1.400"/><path d="M10.500 0.800V4.800H14.500" fill="none" stroke="#5c656b" stroke-width="1.100"/><path d="M7 9.800H18.800M15.400 6.200L19.200 9.800L15.400 13.400" fill="none" stroke="#4a98ff" stroke-width="1.400"/></svg>
<svg class="a" style="left:786px;top:116.800px" width="11.400" height="11.600" viewBox="0 0 12 12"><path d="M0.800 0.800L11.200 11.200M11.200 0.800L0.800 11.200" stroke="#2a3238" stroke-width="1.600" fill="none" stroke-linecap="round"/></svg>
<div class="a w" style="left:481px;top:140px;width:307px;height:20px"></div>
<div class="a w" style="left:481px;top:159px;width:309px;height:171px"></div>

<div class="hs" style="left:505px;top:140px;height:19px"></div>
<div class="hs" style="left:539px;top:140px;height:19px"></div>
<div class="hs" style="left:699px;top:140px;height:19px"></div>
<div class="hs" style="left:732px;top:140px;height:19px"></div>
<div class="hs" style="left:748px;top:140px;height:19px"></div>
<div class="hs" style="left:772px;top:140px;height:19px"></div>
<div class="t" style="left:490.5px;top:143.48px;font-size:11.6px;color:#2a2a2a;transform:scaleX(0.8600);transform-origin:0 0"><span id="rh">#</span></div>
<svg class="a" style="left:515px;top:143px" width="14" height="14" viewBox="0 0 14 14"><circle cx="7" cy="7" r="6" fill="#fff"/><path d="M7 7V1A6 6 0 0 0 1.800 10Z" fill="#8d959b"/><path d="M7 7L1.800 10A6 6 0 0 0 12.200 10Z" fill="#dadada"/><circle cx="7" cy="7" r="6" fill="none" stroke="#2f373d" stroke-width="1.400"/><path d="M7 1V7L1.800 10M7 7L12.200 10" fill="none" stroke="#2f373d" stroke-width="1.300"/></svg>
<div class="t" style="left:540.6px;top:143.48px;font-size:11.6px;color:#2a2a2a;transform:scaleX(1.0055);transform-origin:0 0"><span id="rname">Όνομα</span></div>
<svg class="a" style="left:708px;top:144px" width="16" height="12" viewBox="0 0 16 12"><defs><clipPath id="fc708_144"><path d="M5.500 0.600H14.500L9 6L15.200 11.400H0.600V5.500Z"/></clipPath></defs><g clip-path="url(#fc708_144)" stroke="#2f373d" stroke-width="1.0"><path d="M-4 13L10 -1M-1 13L13 -1M5 13L19 -1M8 13L22 -1"/><path d="M11.500 11.400L13.500 9.600L15.600 11.400Z" fill="#2f373d" stroke="none"/></g><path d="M5.500 0.600H14.500L9 6L15.200 11.400H0.600V5.500Z" fill="none" stroke="#2f373d" stroke-width="1.25" stroke-linejoin="round"/></svg>
<svg class="a" style="left:754px;top:144.5px" width="13" height="12" viewBox="0 0 13 12"><path d="M2 0.700H9.200L12.300 3.800V10Q12.300 11.300 11 11.300H2Q0.700 11.300 0.700 10V2Q0.700 0.700 2 0.700Z" fill="#fdfdfd" stroke="#7f878d" stroke-width="1.3"/><path d="M0.900 10.300Q1 11.300 2 11.300H11Q12 11.300 12.100 10.300" fill="none" stroke="#2f373d" stroke-width="1.4"/><path d="M1.200 0.900Q1.500 0.700 2 0.700H9.200L12.300 3.800" fill="none" stroke="#2f373d" stroke-width="1.4"/><path d="M9 0.800V4H12.200Z" fill="#2f373d"/><rect x="9.700" y="2.100" width="1.300" height="1.200" fill="#fff"/><circle cx="4.600" cy="4.400" r="1.750" fill="#fff" stroke="#2f373d" stroke-width="1.1"/><path d="M0.900 7.300L2.200 7.800L4.200 9.800L5.400 9.300L7.500 7.200L8.600 7.600L11.900 10.300" fill="none" stroke="#2f373d" stroke-width="1.1" stroke-linejoin="round"/></svg>
<svg class="a" style="left:795px;top:166.5px" width="7" height="5.4" viewBox="0 0 7 5.4"><path d="M0.6 4.4L3.5 1.2L6.4 4.4" fill="none" stroke="#b4b4b4" stroke-width="1.1"/></svg>
<svg class="a" style="left:795px;top:319px" width="7" height="5.4" viewBox="0 0 7 5.4"><path d="M0.6 1L3.5 4.2L6.4 1" fill="none" stroke="#b4b4b4" stroke-width="1.1"/></svg>
<div class="a" style="left:481px;top:334px;width:326px;height:6px;background:#f8f8f8"></div>
<div class="t" style="left:478.5px;top:347.04px;font-size:10px;color:#222;transform:scaleX(0.9774);transform-origin:0 0"><span id="sx2">Συσχετισμένα Χαρακτηριστικά</span></div>
<div class="a w" style="left:481px;top:370px;width:307px;height:20px"></div>
<div class="a w" style="left:481px;top:389px;width:309px;height:166px"></div>

<div class="hs" style="left:505px;top:370px;height:19px"></div>
<div class="hs" style="left:555px;top:370px;height:19px"></div>
<div class="hs" style="left:579px;top:370px;height:19px"></div>
<div class="hs" style="left:613px;top:370px;height:19px"></div>
<div class="t" style="left:506.3px;top:373.58px;font-size:11.6px;color:#2a2a2a;transform:scaleX(0.9506);transform-origin:0 0"><span id="rt">Τύπος</span></div>
<div class="t" style="left:564.5px;top:373.58px;font-size:11.6px;color:#2a2a2a;transform:scaleX(0.8600);transform-origin:0 0"><span id="rh2">#</span></div>
<div class="t" style="left:614.2px;top:373.58px;font-size:11.6px;color:#2a2a2a;transform:scaleX(1.0171);transform-origin:0 0"><span id="rn">Όνομα</span></div>
<svg class="a" style="left:795px;top:396px" width="7" height="5.4" viewBox="0 0 7 5.4"><path d="M0.6 4.4L3.5 1.2L6.4 4.4" fill="none" stroke="#b4b4b4" stroke-width="1.1"/></svg>
<svg class="a" style="left:795px;top:543.5px" width="7" height="5.4" viewBox="0 0 7 5.4"><path d="M0.6 1L3.5 4.2L6.4 1" fill="none" stroke="#b4b4b4" stroke-width="1.1"/></svg>
<div class="btn" style="left:621px;top:578px;width:89px"></div><div class="btn" style="left:721px;top:578px;width:89px;border:1.500px solid #0078d7"></div>
<div class="t" style="left:648.5px;top:582.78px;font-size:11.6px;color:#262626;transform:scaleX(1.0054);transform-origin:0 0"><span id="akyro">Άκυρο</span></div>
<div class="t" style="left:758.2px;top:582.78px;font-size:11.6px;color:#262626;transform:scaleX(0.9245);transform-origin:0 0"><span id="ok">OK</span></div>
<svg class="a" style="left:809px;top:604px" width="10" height="10" viewBox="0 0 10 10" fill="#b8b8b8"><rect x="7" y="1" width="2" height="2"/><rect x="4" y="4" width="2" height="2"/><rect x="7" y="4" width="2" height="2"/><rect x="1" y="7" width="2" height="2"/><rect x="4" y="7" width="2" height="2"/><rect x="7" y="7" width="2" height="2"/></svg>

<div class="a" style="left:5px;top:103px;width:468px;height:457px;border:2px solid #ff0000"></div>
<div class="a" style="left:9px;top:108px;width:336px;height:29px;border:2px solid #ff0000"></div>
</body>
</html>
